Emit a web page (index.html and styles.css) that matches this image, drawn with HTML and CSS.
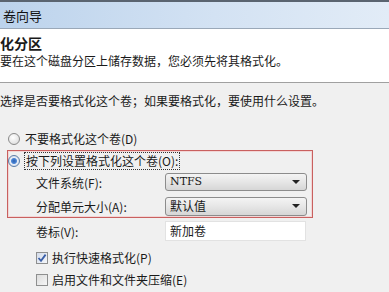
FILE: index.html
```html
<!DOCTYPE html>
<html>
<head>
    <meta charset="UTF-8">
    <title>格式化分区</title>
    <link rel="stylesheet" href="styles.css">
</head>
<body>
    <div class="titlebar">卷向导</div>

    <div class="header">
        <h1>化分区</h1>
        <p>要在这个磁盘分区上储存数据，您必须先将其格式化。</p>
    </div>

    <div class="main">
        <p class="intro">选择是否要格式化这个卷；如果要格式化，要使用什么设置。</p>

        <div class="opt">
            <span class="radio"></span>
            <span>不要格式化这个卷(D)</span>
        </div>

        <div class="group">
            <div class="opt">
                <span class="radio on"></span>
                <span class="focus">按下列设置格式化这个卷(O):</span>
            </div>
            <div class="field first">
                <span class="lbl">文件系统(F):</span>
                <div class="select">NTFS<span class="arrow"></span></div>
            </div>
            <div class="field second">
                <span class="lbl">分配单元大小(A):</span>
                <div class="select">默认值<span class="arrow"></span></div>
            </div>
        </div>

        <div class="field outside">
            <span class="lbl">卷标(V):</span>
            <div class="textbox">新加卷</div>
        </div>

        <div class="check-row first">
            <span class="check on">
                <svg width="10" height="10" viewBox="0 0 10 10"><path d="M1.5 5 L4 7.8 L8.6 1.6" fill="none" stroke="#3a5fa8" stroke-width="1.8"/></svg>
            </span>
            <span>执行快速格式化(P)</span>
        </div>
        <div class="check-row">
            <span class="check"></span>
            <span>启用文件和文件夹压缩(E)</span>
        </div>
    </div>
</body>
</html>
```

FILE: styles.css
```css
* {
    margin: 0;
    padding: 0;
    box-sizing: border-box;
}

body {
    width: 389px;
    height: 292px;
    overflow: hidden;
    background: #f0f0f0;
    font-family: "Noto Sans CJK SC", "DejaVu Sans", sans-serif;
    font-size: 12px;
    color: #1a1a1a;
}

.titlebar {
    height: 29px;
    padding: 4px 0 0 3px;
    font-size: 13px;
    line-height: 20px;
    color: #111;
    border-top: 2px solid #5a6470;
    border-bottom: 1px solid #9aa8b8;
    background: linear-gradient(to right, #bcd3ec, #d3e2f3 55%, #e2ecf7);
}

.header {
    height: 54px;
    background: #fff;
    padding-top: 6px;
    border-bottom: 1px solid #a0a0a0;
}
.header h1 {
    font-size: 14px;
    font-weight: bold;
    line-height: 16px;
    margin-bottom: 2px;
}
.header p {
    line-height: 16px;
}

.main {
    padding-top: 10px;
}
.intro {
    line-height: 16px;
}

.opt {
    display: flex;
    align-items: center;
    height: 16px;
    line-height: 16px;
    padding-left: 8px;
    margin-top: 22px;
}
.radio {
    width: 12px;
    height: 12px;
    border-radius: 50%;
    border: 1px solid #8a8a8a;
    background: radial-gradient(circle at 40% 35%, #fff, #d8d8d8);
    margin-right: 5px;
    flex-shrink: 0;
}
.radio.on {
    background: radial-gradient(circle, #2a5fb0 0, #4d87d6 2.5px, #e8eef8 3.5px, #d0d8e4 6px);
    border-color: #5d7ea8;
}
.focus {
    outline: 1px dotted #333;
    outline-offset: 0;
    padding: 0 1px;
}

.group {
    margin: 3px 0 0 7px;
    width: 306px;
    height: 68px;
    border: 1px solid #c9605f;
    box-shadow: inset 0 0 0 1px #f2d6d6;
    padding-top: 2px;
}
.group .opt {
    margin-top: 0;
    padding-left: 0;
}

.field {
    display: flex;
    align-items: center;
    padding-left: 28px;
}
.field.first {
    margin-top: 4px;
}
.field.second {
    margin-top: 6px;
}
.field.outside {
    margin-top: 3px;
    padding-left: 36px;
}
.lbl {
    width: 129px;
    flex-shrink: 0;
}

.select {
    position: relative;
    width: 142px;
    height: 18px;
    line-height: 16px;
    padding-left: 4px;
    border: 1px solid #8c8c8c;
    border-radius: 3px;
    background: linear-gradient(#f4f4f4, #e6e6e6 50%, #d6d6d6);
    font-family: "DejaVu Serif", "Noto Sans CJK SC", serif;
    font-size: 11px;
}
.second .select {
    height: 19px;
    font-family: "Noto Sans CJK SC", sans-serif;
    font-size: 12px;
}
.arrow {
    position: absolute;
    right: 6px;
    top: 6px;
    width: 0;
    height: 0;
    border-left: 4px solid transparent;
    border-right: 4px solid transparent;
    border-top: 4px solid #222;
}

.textbox {
    width: 141px;
    height: 20px;
    line-height: 18px;
    padding-left: 4px;
    background: #fff;
    border: 1px solid #e2e2e2;
}

.check-row {
    display: flex;
    align-items: center;
    height: 16px;
    line-height: 16px;
    padding-left: 36px;
    margin-top: 6px;
}
.check-row.first {
    margin-top: 9px;
}
.check {
    display: flex;
    align-items: center;
    justify-content: center;
    width: 12px;
    height: 12px;
    border: 1px solid #8e8f8f;
    background: linear-gradient(135deg, #dcdcdc, #f6f6f6);
    margin-right: 4px;
    flex-shrink: 0;
}
.check.on {
    background: linear-gradient(135deg, #d4dcea, #f4f6fa);
}
```
